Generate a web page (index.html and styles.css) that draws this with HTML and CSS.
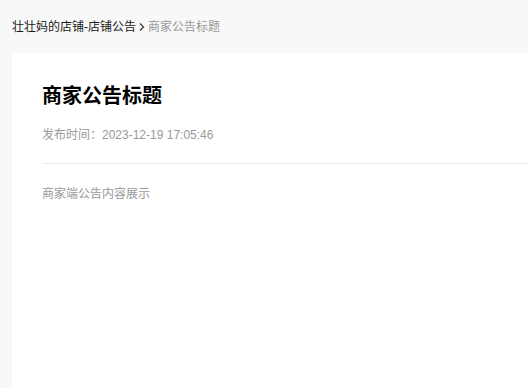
FILE: index.html
```html
<!DOCTYPE html>
<html lang="zh">
<head>
<meta charset="utf-8">
<link rel="stylesheet" href="styles.css">
</head>
<body>
<div class="page">
  <nav class="crumbs">
    <span class="crumb-link">壮壮妈的店铺-店铺公告</span>
    <svg class="sep" width="8" height="10" viewBox="0 0 8 10"><path d="M2 1.5 L5.5 5 L2 8.5" fill="none" stroke="#333" stroke-width="1.2"/></svg>
    <span class="crumb-current">商家公告标题</span>
  </nav>
  <main class="card">
    <h1 class="title">商家公告标题</h1>
    <div class="meta">发布时间：2023-12-19 17:05:46</div>
    <div class="divider"></div>
    <div class="content">商家端公告内容展示</div>
  </main>
</div>
</body>
</html>
```
FILE: styles.css
```css
html, body {
  margin: 0;
  padding: 0;
  background: #f8f8f8;
  overflow: hidden;
}
body {
  font-family: "Liberation Sans", "Noto Sans CJK SC", sans-serif;
  color: #000;
}
.page {
  display: flex;
  flex-direction: column;
  height: 100vh;
}
.crumbs {
  display: flex;
  align-items: center;
  padding: 17px 0 0 12px;
  font-size: 12px;
  line-height: 20px;
  height: 20px;
}
.crumb-link { color: #1a1a1a; }
.sep { margin: 0 2px 0 2px; }
.crumb-current { color: #999; }
.card {
  flex: 1;
  margin: 16px 0 0 12px;
  background: #fff;
  padding: 29px 0 0 30px;
}
.title {
  margin: 0;
  font-size: 20px;
  line-height: 28px;
  font-weight: bold;
  color: #000;
}
.meta {
  margin-top: 15px;
  font-size: 12px;
  line-height: 20px;
  color: #999;
}
.divider {
  margin-top: 18px;
  height: 1px;
  background: #eaeaea;
}
.content {
  margin-top: 20px;
  font-size: 12px;
  line-height: 20px;
  color: #999;
}
```
